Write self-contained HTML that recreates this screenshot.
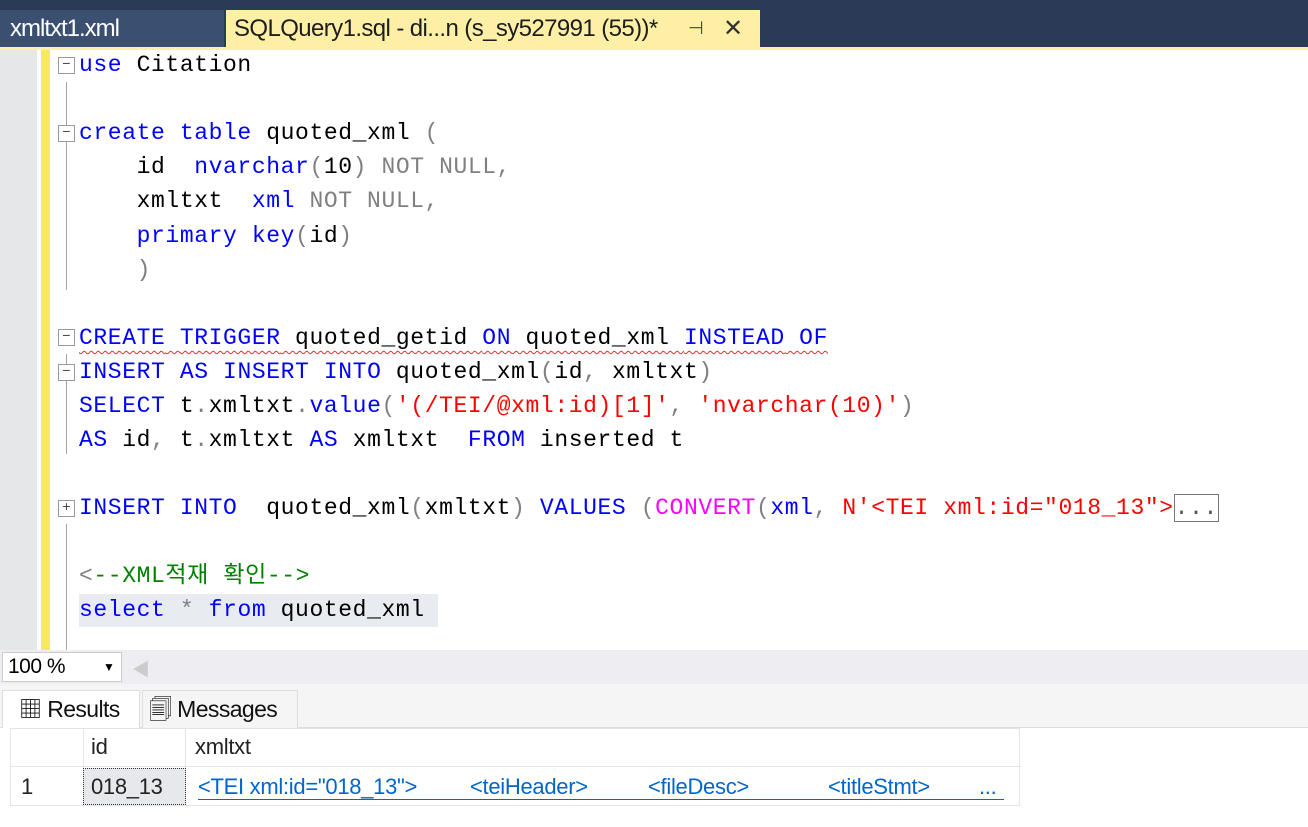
<!DOCTYPE html>
<html><head><meta charset="utf-8"><style>
*{margin:0;padding:0;box-sizing:border-box}
body{width:1308px;height:827px;overflow:hidden;background:#fff;position:relative;font-family:"Liberation Sans","Noto Sans CJK KR",sans-serif}
.tabbar{position:absolute;left:0;top:0;width:1308px;height:47px;background:#2b3a57}
.tab1{position:absolute;left:0;top:10px;width:224px;height:37px;background:#3b4f71;color:#fff;font-size:24px;line-height:37px;padding-left:10px;letter-spacing:-1px}
.tab2{position:absolute;left:226px;top:10px;width:534px;height:39px;background:#fdf0a6;color:#1e1e1e;font-size:24px;line-height:37px;padding-left:8px;letter-spacing:-0.6px}
.yl{position:absolute;left:0;top:47px;width:1308px;height:3px;background:#fdf0a6}
.gm{position:absolute;left:0;top:50px;width:37px;height:600px;background:#e6e7e8}
.yb{position:absolute;left:41px;top:50px;width:9px;height:600px;background:#f8e862}
.ol{position:absolute;left:66px;width:1px;background:#a5a5a5}
.box{position:absolute;left:58px;width:17px;height:17px;border:1px solid #9a9a9a;background:#fff;font:14px/15px "Liberation Mono",monospace;color:#444;text-align:center}
.code{position:absolute;left:79px;font:23px/34px "Liberation Mono","Noto Sans CJK KR",monospace;letter-spacing:0.6px;white-space:pre;color:#000}
.k{color:#0000ff}.g{color:#808080}.r{color:#ff0000}.m{color:#ff00ff}.c{color:#008000}
.sq{text-decoration:underline wavy #e03030;text-decoration-thickness:1px;text-underline-offset:6px}
.zoombar{position:absolute;left:0;top:650px;width:1308px;height:34px;background:#eeeef2}
.zoomsel{position:absolute;left:2px;top:652px;width:120px;height:30px;background:#fff;border:1px solid #ccc;font-size:21px;line-height:28px;padding-left:5px;color:#000;letter-spacing:-0.5px}
.rarea{position:absolute;left:0;top:684px;width:1308px;height:143px;background:#fff}
.rtabs{position:absolute;left:0;top:684px;width:1308px;height:44px;background:#f5f5f5;border-bottom:1px solid #ddd}
.rt{position:absolute;top:690px;height:38px;font-size:23px;line-height:36px;color:#111;letter-spacing:-0.6px}
.grid{position:absolute;left:10px;top:728px;width:1010px;height:78px;border:1px solid #e4e4e4;background:#fff}
.cell{position:absolute;font-size:22px;color:#222;letter-spacing:-0.3px;white-space:pre}
.ln{color:#0066cc}
</style></head><body>
<div class="tabbar"></div>
<div class="tab1">xmltxt1.xml</div>
<div class="tab2">SQLQuery1.sql - di...n (s_sy527991 (55))*<span style="position:absolute;left:462px;font-size:18px;color:#444">⊣</span><span style="position:absolute;left:497px;font-size:24px;color:#333">✕</span></div>
<div class="yl"></div>
<div class="gm"></div>
<div class="yb"></div>

<div class="ol" style="top:82px;height:208px"></div>
<div class="ol" style="top:354px;height:100px"></div>
<div class="ol" style="top:524px;height:126px"></div>
<div class="box" style="top:57px">−</div>
<div class="box" style="top:125px">−</div>
<div class="box" style="top:329px">−</div>
<div class="box" style="top:364px">−</div>
<div class="box" style="top:500px">+</div>

<div class="code" style="top:48px"><span class="k">use</span> Citation</div>
<div class="code" style="top:116px"><span class="k">create</span> <span class="k">table</span> quoted_xml <span class="g">(</span></div>
<div class="code" style="top:150px">    id  <span class="k">nvarchar</span><span class="g">(</span>10<span class="g">)</span> <span class="g">NOT NULL,</span></div>
<div class="code" style="top:184px">    xmltxt  <span class="k">xml</span> <span class="g">NOT NULL,</span></div>
<div class="code" style="top:219px">    <span class="k">primary</span> <span class="k">key</span><span class="g">(</span>id<span class="g">)</span></div>
<div class="code" style="top:253px">    <span class="g">)</span></div>
<div class="code" style="top:321px"><span class="sq"><span class="k">CREATE</span> <span class="k">TRIGGER</span> quoted_getid <span class="k">ON</span> quoted_xml <span class="k">INSTEAD</span> <span class="k">OF</span></span></div>
<div class="code" style="top:355px"><span class="k">INSERT</span> <span class="k">AS</span> <span class="k">INSERT</span> <span class="k">INTO</span> quoted_xml<span class="g">(</span>id<span class="g">,</span> xmltxt<span class="g">)</span></div>
<div class="code" style="top:389px"><span class="k">SELECT</span> t<span class="g">.</span>xmltxt<span class="g">.</span><span class="k">value</span><span class="g">(</span><span class="r">'(/TEI/@xml:id)[1]'</span><span class="g">,</span> <span class="r">'nvarchar(10)'</span><span class="g">)</span></div>
<div class="code" style="top:423px"><span class="k">AS</span> id<span class="g">,</span> t<span class="g">.</span>xmltxt <span class="k">AS</span> xmltxt  <span class="k">FROM</span> inserted t</div>
<div class="code" style="top:491px"><span class="k">INSERT</span> <span class="k">INTO</span>  quoted_xml<span class="g">(</span>xmltxt<span class="g">)</span> <span class="k">VALUES</span> <span class="g">(</span><span class="m">CONVERT</span><span class="g">(</span><span class="k">xml</span><span class="g">,</span> <span class="r">N'&lt;TEI xml:id="018_13"&gt;</span><span style="border:1px solid #777;color:#555">...</span></div>
<div class="code" style="top:559px"><span class="g">&lt;</span><span class="c">--XML적재 확인--&gt;</span></div>
<div style="position:absolute;left:79px;top:594px;width:359px;height:33px;background:#e8ebf0"></div>
<div class="code" style="top:593px"><span class="k">select</span> <span class="g">*</span> <span class="k">from</span> quoted_xml</div>

<div class="zoombar"></div>
<div class="zoomsel">100 %<span style="position:absolute;left:100px;font-size:12px">▼</span></div>
<div style="position:absolute;left:132px;top:656px;color:#ccc;font-size:18px">◀</div>
<div class="rarea"></div>
<div class="rtabs"></div>
<div class="rt" style="left:2px;width:138px;background:#fff;border:1px solid #ddd;border-bottom:none;padding-left:16px">▦ Results</div>
<div class="rt" style="left:142px;width:156px;border:1px solid #ddd;border-bottom:none;padding-left:6px;background:#f5f5f5">🗐 Messages</div>
<div class="grid">
<div style="position:absolute;left:0;top:0;width:1010px;height:38px;border-bottom:1px solid #e4e4e4"></div>
<div style="position:absolute;left:72px;top:0;width:1px;height:78px;background:#e4e4e4"></div>
<div style="position:absolute;left:174px;top:0;width:1px;height:78px;background:#e4e4e4"></div>
<div class="cell" style="left:80px;top:5px">id</div>
<div class="cell" style="left:184px;top:5px">xmltxt</div>
<div class="cell" style="left:10px;top:45px">1</div>
<div style="position:absolute;left:72px;top:39px;width:103px;height:37px;background:#e6e8ec;border:1px dotted #333"></div>
<div class="cell" style="left:80px;top:45px">018_13</div>
<div style="position:absolute;left:187px;top:70px;width:806px;height:1px;background:#0066cc"></div>
<div class="cell ln" style="left:187px;top:45px">&lt;TEI xml:id="018_13"&gt;</div>
<div class="cell ln" style="left:459px;top:45px">&lt;teiHeader&gt;</div>
<div class="cell ln" style="left:637px;top:45px">&lt;fileDesc&gt;</div>
<div class="cell ln" style="left:817px;top:45px">&lt;titleStmt&gt;</div>
<div class="cell ln" style="left:968px;top:45px">...</div>
</div>
</body></html>
